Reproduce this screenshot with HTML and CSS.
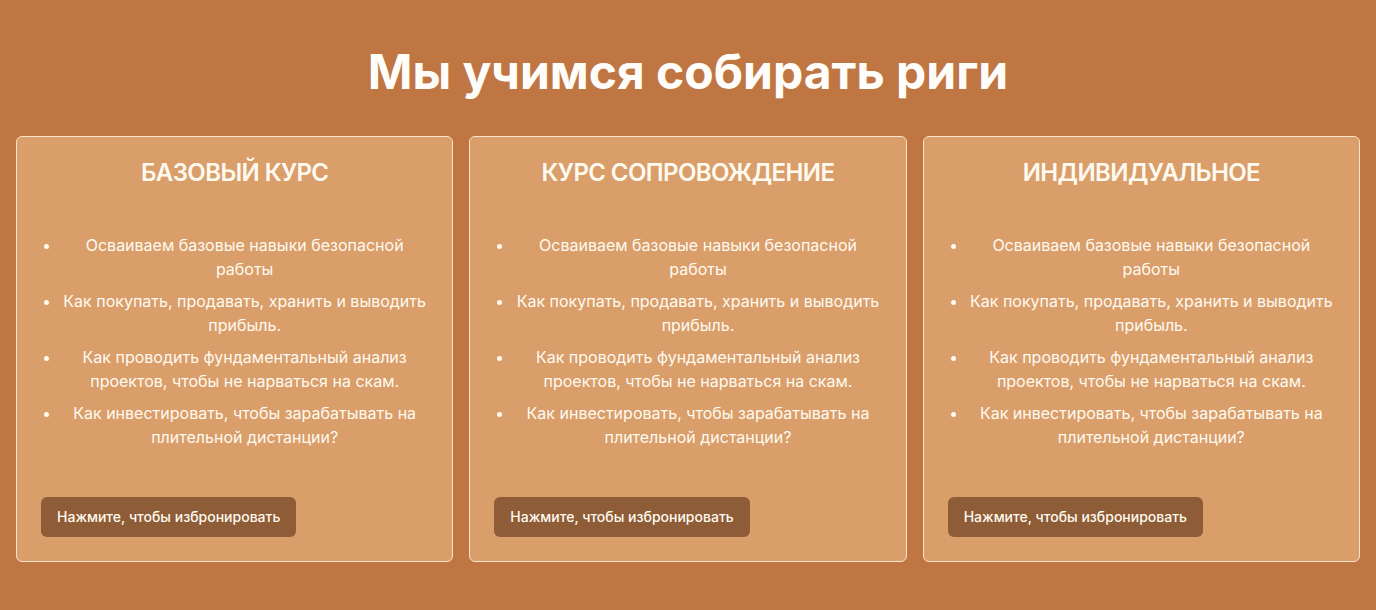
FILE: index.html
```html
<!DOCTYPE html>
<html lang="ru">
<head>
<meta charset="utf-8">
<meta name="viewport" content="width=device-width, initial-scale=1">
<title>Мы учимся собирать риги</title>
<link rel="stylesheet" href="styles.css">
</head>
<body>
<main class="courses">
  <h1 class="courses-title">Мы учимся собирать риги</h1>
  <div class="course-grid">
    <section class="card">
      <h2 class="card-title">БАЗОВЫЙ КУРС</h2>
      <ul class="card-list">
        <li>Осваиваем базовые навыки безопасной работы</li>
        <li>Как покупать, продавать, хранить и выводить прибыль.</li>
        <li>Как проводить фундаментальный анализ проектов, чтобы не нарваться на скам.</li>
        <li>Как инвестировать, чтобы зарабатывать на плительной дистанции?</li>
      </ul>
      <button class="card-button" type="button">Нажмите, чтобы избронировать</button>
    </section>
    <section class="card">
      <h2 class="card-title">КУРС СОПРОВОЖДЕНИЕ</h2>
      <ul class="card-list">
        <li>Осваиваем базовые навыки безопасной работы</li>
        <li>Как покупать, продавать, хранить и выводить прибыль.</li>
        <li>Как проводить фундаментальный анализ проектов, чтобы не нарваться на скам.</li>
        <li>Как инвестировать, чтобы зарабатывать на плительной дистанции?</li>
      </ul>
      <button class="card-button" type="button">Нажмите, чтобы избронировать</button>
    </section>
    <section class="card">
      <h2 class="card-title">ИНДИВИДУАЛЬНОЕ</h2>
      <ul class="card-list">
        <li>Осваиваем базовые навыки безопасной работы</li>
        <li>Как покупать, продавать, хранить и выводить прибыль.</li>
        <li>Как проводить фундаментальный анализ проектов, чтобы не нарваться на скам.</li>
        <li>Как инвестировать, чтобы зарабатывать на плительной дистанции?</li>
      </ul>
      <button class="card-button" type="button">Нажмите, чтобы избронировать</button>
    </section>
  </div>
</main>
</body>
</html>
```
FILE: styles.css
```css
* {
  box-sizing: border-box;
}

body {
  margin: 0;
  background: #c07643;
  color: #fffaf0;
  font-family: Inter, sans-serif;
  font-size: 16px;
  line-height: 24px;
}

.courses {
  padding: 48px 16px;
}

.courses-title {
  margin: 0 0 40px;
  color: #fffdfa;
  font-size: 48px;
  font-weight: 700;
  line-height: 48px;
  text-align: center;
}

.course-grid {
  display: grid;
  grid-template-columns: repeat(3, 1fr);
  gap: 16px;
}

.card {
  display: flex;
  flex-direction: column;
  align-items: flex-start;
  padding: 24px;
  border: 1px solid #f8e3cb;
  border-radius: 6px;
  background: #d99e6a;
}

.card-title {
  align-self: stretch;
  margin: 0;
  font-size: 24px;
  font-weight: 600;
  line-height: 24px;
  letter-spacing: -0.025em;
  text-align: center;
}

.card-list {
  display: grid;
  gap: 8px;
  align-self: stretch;
  margin: 48px 0;
  padding: 0 0 0 20px;
  text-align: center;
}

.card-button {
  height: 40px;
  margin: 0;
  padding: 0 16px;
  border: 0;
  border-radius: 6px;
  background: #8e5c36;
  color: #fffaf0;
  font: 500 14px/20px Inter, sans-serif;
  cursor: pointer;
}

@media (max-width: 800px) {
  .course-grid {
    grid-template-columns: 1fr;
  }
}
```
